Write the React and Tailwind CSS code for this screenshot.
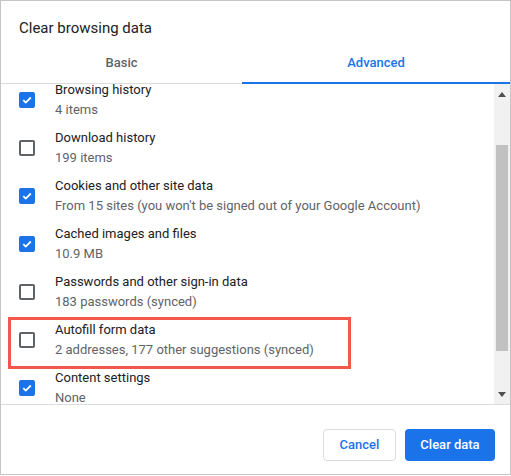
import React from "react";

const items = [
  { t: "Browsing history", s: "4 items", c: true },
  { t: "Download history", s: "199 items", c: false },
  { t: "Cookies and other site data", s: "From 15 sites (you won't be signed out of your Google Account)", c: true },
  { t: "Cached images and files", s: "10.9 MB", c: true },
  { t: "Passwords and other sign-in data", s: "183 passwords (synced)", c: false },
  { t: "Autofill form data", s: "2 addresses, 177 other suggestions (synced)", c: false, hl: true },
  { t: "Content settings", s: "None", c: true },
];

function Check({ on }) {
  if (on)
    return (
      <div className="w-4 h-4 rounded-[2px] bg-[#1a73e8] flex items-center justify-center shrink-0">
        <svg width="12" height="12" viewBox="0 0 12 12">
          <path d="M2.3 6.2 L4.8 8.6 L9.8 3.5" fill="none" stroke="white" strokeWidth="1.8" />
        </svg>
      </div>
    );
  return <div className="w-4 h-4 rounded-[2px] border-2 border-[#5f6368] shrink-0" />;
}

export default function App() {
  return (
    <div
      className="w-[511px] h-[475px] border border-[#c4c4c4] bg-white flex flex-col overflow-hidden"
      style={{ fontFamily: "Roboto, 'Liberation Sans', sans-serif" }}
    >
      <div className="h-[42px] pl-[18px] pt-[17px] text-[15px] leading-[20px] text-[#202124]">
        Clear browsing data
      </div>
      <div className="grid grid-cols-[241px_1fr] h-[41px] border-b border-[#dadce0] text-[13px] font-medium">
        <div className="flex items-center justify-center text-[#5f6368] pb-[1px]">Basic</div>
        <div className="flex items-center justify-center text-[#1a73e8] border-b-2 border-[#1a73e8] -mb-[1px] pt-[1px]">
          Advanced
        </div>
      </div>
      <div className="h-[321px] flex border-b border-[#dadce0] overflow-hidden">
        <div className="flex-1 overflow-hidden">
          <div className="-mt-[8px] relative">
            {items.map((it, i) => (
              <div key={i} className="relative h-[48px] flex items-center pl-[18px] gap-[20px]">
                <Check on={it.c} />
                <div className="text-[13px] leading-[20px]">
                  <div className="text-[#202124]">{it.t}</div>
                  <div className="text-[#5f6368]">{it.s}</div>
                </div>
                {it.hl && (
                  <div className="absolute left-[7px] top-[1px] w-[343px] h-[52px] border-[3px] border-[#f4584c] pointer-events-none" />
                )}
              </div>
            ))}
          </div>
        </div>
        <div className="w-[16px] bg-[#f1f1f1] flex flex-col items-center">
          <div className="h-[20px] flex items-center justify-center">
            <svg width="8" height="5" viewBox="0 0 8 5"><path d="M0 5 L4 0 L8 5 Z" fill="#505050" /></svg>
          </div>
          <div className="mt-[41px] w-[12px] h-[206px] bg-[#c1c1c1]" />
          <div className="flex-1" />
          <div className="h-[20px] flex items-center justify-center">
            <svg width="8" height="5" viewBox="0 0 8 5"><path d="M0 0 L4 5 L8 0 Z" fill="#505050" /></svg>
          </div>
        </div>
      </div>
      <div className="flex-1 flex justify-end items-start pt-[24px] pr-[15px] gap-[9px] text-[13px] font-medium">
        <button className="h-[32px] w-[73px] rounded-[4px] border border-[#dadce0] text-[#1a73e8] bg-white">
          Cancel
        </button>
        <button className="h-[32px] w-[90px] rounded-[4px] bg-[#1a73e8] text-white">
          Clear data
        </button>
      </div>
    </div>
  );
}
